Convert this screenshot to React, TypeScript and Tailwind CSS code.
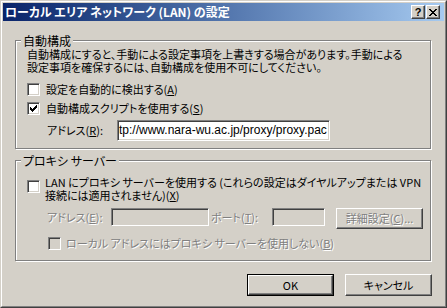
import React from "react"

const sunken =
  "border border-t-[#808080] border-l-[#808080] border-r-white border-b-white shadow-[inset_1px_1px_0_#404040,inset_-1px_-1px_0_#d4d0c8]"
const raised =
  "border border-t-white border-l-white border-r-[#404040] border-b-[#404040] shadow-[inset_-1px_-1px_0_#808080] bg-[#d4d0c8]"
const etched =
  "border border-[#808080] shadow-[inset_1px_1px_0_#fff,1px_1px_0_#fff]"
const dim = "text-[#808080] [text-shadow:1px_1px_0_#fff]"

const Check = ({ checked = false, disabled = false }: { checked?: boolean; disabled?: boolean }) => (
  <span
    className={`${sunken} w-[13px] h-[13px] shrink-0 flex items-center justify-center ${
      disabled ? "bg-[#d4d0c8]" : "bg-white"
    }`}
  >
    {checked && (
      <svg width="7" height="7" viewBox="0 0 7 7" shapeRendering="crispEdges">
        <path d="M0 2h1v1h1v1h1V3h1V2h1V1h1V0h1v3H6v1H5v1H4v1H3v1H2V6H1V5H0z" fill="#000" />
      </svg>
    )}
  </span>
)

const Legend = ({ children }: { children: React.ReactNode }) => (
  <span className="-mt-[7px] ml-[5px] px-[2px] self-start bg-[#d4d0c8] text-[12px] leading-[13px]">{children}</span>
)

export default function App() {
  return (
    <div className="w-[447px] h-[308px] bg-[#d4d0c8] border border-t-[#d4d0c8] border-l-[#d4d0c8] border-r-[#404040] border-b-[#404040] font-['Noto_Sans_CJK_JP',sans-serif] text-[12px] text-black [font-feature-settings:'palt'] overflow-hidden">
      <div className="h-full border border-t-white border-l-white border-r-[#808080] border-b-[#808080] p-[1px] flex flex-col">
        {/* title bar */}
        <div className="h-[18px] shrink-0 flex items-center bg-gradient-to-r from-[#0a246a] to-[#a6caf0] pl-[2px] pr-[4px]">
          <span className="text-white font-bold leading-[18px] whitespace-nowrap">
            ローカル エリア ネットワーク (LAN) の設定
          </span>
          <div className="ml-auto flex gap-[1px]">
            <span className={`${raised} w-[14px] h-[14px] flex items-center justify-center font-bold text-[11px] leading-none font-['Liberation_Sans',sans-serif]`}>
              ?
            </span>
            <span className={`${raised} w-[14px] h-[14px] flex items-center justify-center`}>
              <svg width="8" height="7" viewBox="0 0 8 7" shapeRendering="crispEdges">
                <path d="M0 0h2l2 2.5L6 0h2L5 3.5 8 7H6L4 4.5 2 7H0l3-3.5z" fill="#000" />
              </svg>
            </span>
          </div>
        </div>

        {/* body */}
        <div className="flex flex-col pl-[12px] text-[11px]">
          {/* auto config */}
          <div className={`${etched} mt-[19px] w-[416px] h-[109px] flex flex-col`}>
            <Legend>自動構成</Legend>
            <div className="pl-[11px] flex flex-col">
              <p className="mt-[1px] leading-[13px] whitespace-nowrap">
                自動構成にすると、手動による設定事項を上書きする場合があります。手動による
                <br />
                設定事項を確保するには、自動構成を使用不可にしてください。
              </p>
              <label className="mt-[9px] h-[13px] flex items-center gap-[6px] leading-[13px]">
                <Check />
                <span>
                  設定を自動的に検出する(<u>A</u>)
                </span>
              </label>
              <label className="mt-[6px] h-[13px] flex items-center gap-[6px] leading-[13px]">
                <Check checked />
                <span>
                  自動構成スクリプトを使用する(<u>S</u>)
                </span>
              </label>
              <div className="mt-[5px] flex items-center">
                <span className="ml-[20px] w-[70px] leading-[13px]">
                  アドレス(<u>R</u>):
                </span>
                <div className={`${sunken} bg-white w-[213px] h-[21px] flex items-center pl-[1px] overflow-hidden`}>
                  <span className="whitespace-nowrap font-['Liberation_Sans',sans-serif] text-[12px] leading-[13px] [font-feature-settings:normal]">
                    tp://www.nara-wu.ac.jp/proxy/proxy.pac
                  </span>
                </div>
              </div>
            </div>
          </div>

          {/* proxy server */}
          <div className={`${etched} mt-[11px] w-[416px] h-[101px] flex flex-col`}>
            <Legend>プロキシ サーバー</Legend>
            <div className="pl-[11px] flex flex-col">
              <label className="mt-[9px] flex items-start gap-[5px]">
                <span className="mt-[4px]">
                  <Check />
                </span>
                <span className="leading-[13px] whitespace-nowrap">
                  LAN にプロキシ サーバーを使用する (これらの設定はダイヤルアップまたは VPN
                  <br />
                  接続には適用されません)(<u>X</u>)
                </span>
              </label>
              <div className="mt-[6px] flex items-start">
                <span className={`ml-[20px] w-[64px] h-[18px] flex items-center leading-[13px] ${dim}`}>
                  アドレス(<u>E</u>):
                </span>
                <div className={`${sunken} w-[98px] h-[18px] bg-[#d4d0c8]`} />
                <span className={`ml-[2px] w-[61px] h-[18px] flex items-center leading-[13px] ${dim}`}>
                  ポート(<u>T</u>):
                </span>
                <div className={`${sunken} w-[53px] h-[18px] bg-[#d4d0c8]`} />
                <div className={`${raised} ml-[11px] w-[87px] h-[21px] flex items-center justify-center leading-[13px] ${dim}`}>
                  詳細設定(<u>C</u>)...
                </div>
              </div>
              <label className="mt-[8px] ml-[21px] h-[13px] flex items-center gap-[5px]">
                <Check disabled />
                <span className={`leading-[13px] whitespace-nowrap ${dim}`}>
                  ローカル アドレスにはプロキシ サーバーを使用しない(<u>B</u>)
                </span>
              </label>
            </div>
          </div>

          {/* buttons */}
          <div className="mt-[13px] w-[417px] flex justify-end gap-[11px]">
            <div className="border border-black w-[87px] h-[22px] flex">
              <div className={`${raised} flex-1 flex items-center justify-center leading-[13px]`}>OK</div>
            </div>
            <div className={`${raised} w-[87px] h-[22px] flex items-center justify-center leading-[13px]`}>
              キャンセル
            </div>
          </div>
        </div>
      </div>
    </div>
  )
}
